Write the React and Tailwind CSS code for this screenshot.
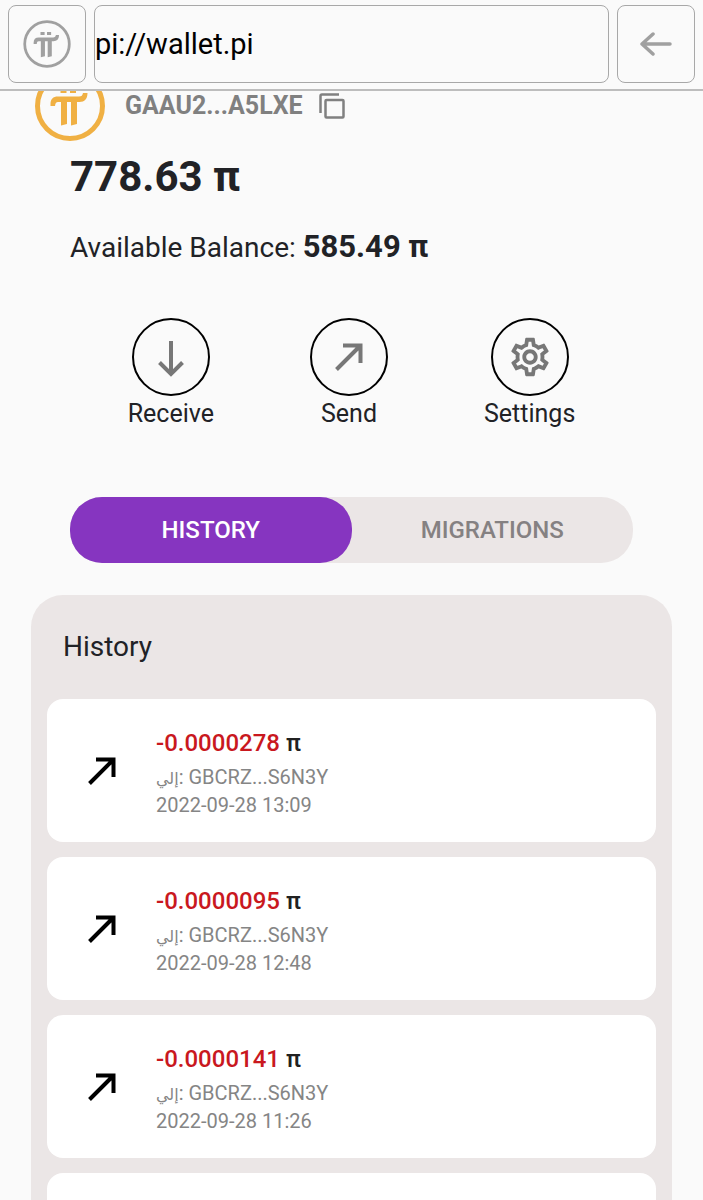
import { useState } from 'react';
import { MdOutlineSettings } from 'react-icons/md';

const transactions = [
    { id: 1, amount: '-0.0000278', to: 'GBCRZ...S6N3Y', date: '2022-09-28 13:09' },
    { id: 2, amount: '-0.0000095', to: 'GBCRZ...S6N3Y', date: '2022-09-28 12:48' },
    { id: 3, amount: '-0.0000141', to: 'GBCRZ...S6N3Y', date: '2022-09-28 11:26' },
    { id: 4, amount: '', to: '', date: '' },
];

const PiLogo = ({ className, ring }) => (
    <svg className={className} viewBox="0 0 70 70" fill="none" stroke="currentColor" aria-hidden="true">
        <circle cx="35" cy="35" r="32.5" strokeWidth={ring} />
        <path d="M25.5 17.500h6v4.500h-6z M35 17.500h6v4.500h-6z" fill="currentColor" stroke="none" />
        <path
            d="M15.500 35V33C15.500 28 18 25.500 23 25.500H44C46.500 25.500 47.500 24.500 48 22H52.500C52.500 28 49.500 31 44.500 31H42V53L36 54.500V31H32V53L26 54.500V31H23C21 31 20.500 32 20 35Z"
            fill="currentColor"
            stroke="none"
        />
    </svg>
);

const CopyIcon = ({ className }) => (
    <svg className={className} viewBox="0 0 26 26" fill="none" stroke="currentColor" strokeWidth="2.500" strokeLinejoin="round" aria-hidden="true">
        <path d="M1.500 20V3Q1.500 1.500 3 1.500H20" />
        <rect x="6.500" y="7" width="18" height="17.500" rx="1" />
    </svg>
);

const ArrowUpRight = ({ className }) => (
    <svg className={className} viewBox="0 0 28 28" fill="none" stroke="currentColor" strokeWidth="4" aria-hidden="true">
        <path d="M1.500 26.500L25 3M8 2.500H25.500V20" />
    </svg>
);

const ArrowDown = ({ className }) => (
    <svg className={className} viewBox="0 0 28 36" fill="none" stroke="currentColor" strokeWidth="4" aria-hidden="true">
        <path d="M14 0V33M2.500 21.500L14 33L25.500 21.500" />
    </svg>
);

const ArrowLeft = ({ className }) => (
    <svg className={className} viewBox="0 0 32 26" fill="none" stroke="currentColor" strokeWidth="3.500" strokeLinecap="round" strokeLinejoin="round" aria-hidden="true">
        <path d="M30 13H2M13 3L2 13L13 23" />
    </svg>
);

const Action = ({ label, children }) => (
    <button type="button" className="flex flex-col items-center text-[25px] leading-9">
        <span className="flex h-[78px] w-[78px] items-center justify-center rounded-full border-2 border-black text-[#777777]">
            {children}
        </span>
        {label}
    </button>
);

const Transaction = ({ tx }) => (
    <li className="flex min-h-[143px] items-center rounded-2xl bg-white pl-[41px]">
        {tx.amount && (
            <>
                <ArrowUpRight className="h-7 w-7 shrink-0 text-black" />
                <div className="ml-10 text-xl leading-7 text-[#858585]">
                    <p className="text-2xl leading-10 font-medium text-[#212121]">
                        <span className="text-[#c9181e]">{tx.amount}</span> π
                    </p>
                    <p><span className="text-base leading-none">إلي</span>: {tx.to}</p>
                    <p>{tx.date}</p>
                </div>
            </>
        )}
    </li>
);

const App = () => {
    const [url, setUrl] = useState('pi://wallet.pi');
    const [tab, setTab] = useState('history');

    const tabClass = (name) =>
        tab === name
            ? 'flex-1 rounded-[32px] bg-[#8635c0] text-white'
            : 'flex-1 rounded-[32px] text-[#858182]';

    return (
        <div className="flex h-screen flex-col overflow-hidden bg-[#fafafa] font-['Roboto','DejaVu_Sans',sans-serif] text-[#212226]">
            {/* Browser bar */}
            <header className="z-10 flex shrink-0 gap-2 border-b-2 border-[#bdbdbd] bg-[#fafafa] px-2 pt-[5px] pb-1.5">
                <button type="button" aria-label="Home" className="flex h-[78px] w-[78px] shrink-0 items-center justify-center rounded-lg border border-[#a8a8a8] text-[#a0a0a0]">
                    <PiLogo className="h-12 w-12" ring={4} />
                </button>
                <input
                    type="text"
                    aria-label="Address"
                    value={url}
                    onChange={e => setUrl(e.target.value)}
                    className="h-[78px] min-w-0 flex-1 rounded-lg border border-[#a8a8a8] text-[29px] text-black outline-none"
                />
                <button type="button" aria-label="Back" className="flex h-[78px] w-[78px] shrink-0 items-center justify-center rounded-lg border border-[#a8a8a8] text-[#a0a0a0]">
                    <ArrowLeft className="h-[26px] w-8" />
                </button>
            </header>

            <main className="-mt-5 flex-1 overflow-y-auto [scrollbar-width:none]">
                {/* Account */}
                <div className="flex items-center gap-5 pl-[35px] text-[#808080]">
                    <PiLogo className="h-[70px] w-[70px] text-[#f0b043]" ring={5} />
                    <span className="text-[25px] leading-9 font-bold">GAAU2...A5LXE</span>
                    <button type="button" aria-label="Copy address" className="-ml-1">
                        <CopyIcon className="h-[26px] w-[26px]" />
                    </button>
                </div>

                <section className="px-[70px]">
                    <h1 className="mt-2 text-[42px] leading-[56px] font-bold">778.63 π</h1>
                    <p className="mt-[22px] text-[28px] leading-10">
                        Available Balance: <strong className="text-[31px] font-bold">585.49 π</strong>
                    </p>

                    <div className="mt-[50px] flex justify-center gap-24">
                        <Action label="Receive">
                            <ArrowDown className="mt-1 h-9 w-7" />
                        </Action>
                        <Action label="Send">
                            <ArrowUpRight className="h-7 w-7" />
                        </Action>
                        <Action label="Settings">
                            <MdOutlineSettings className="h-[46px] w-[46px]" />
                        </Action>
                    </div>

                    <div role="tablist" className="mt-[65px] flex h-[66px] rounded-[32px] bg-[#ebe6e6] text-2xl font-medium">
                        <button type="button" role="tab" aria-selected={tab === 'history'} onClick={() => setTab('history')} className={tabClass('history')}>
                            HISTORY
                        </button>
                        <button type="button" role="tab" aria-selected={tab === 'migrations'} onClick={() => setTab('migrations')} className={tabClass('migrations')}>
                            MIGRATIONS
                        </button>
                    </div>
                </section>

                {/* Transactions */}
                <section className="mx-[31px] mt-8 rounded-[32px] bg-[#ebe6e6] px-4 pt-8 pb-4">
                    <h2 className="pl-4 text-[28px] leading-10">History</h2>
                    <ul className="mt-8 flex flex-col gap-[15px]">
                        {transactions.map((tx) => (
                            <Transaction key={tx.id} tx={tx} />
                        ))}
                    </ul>
                </section>
            </main>
        </div>
    );
};

export default App;
